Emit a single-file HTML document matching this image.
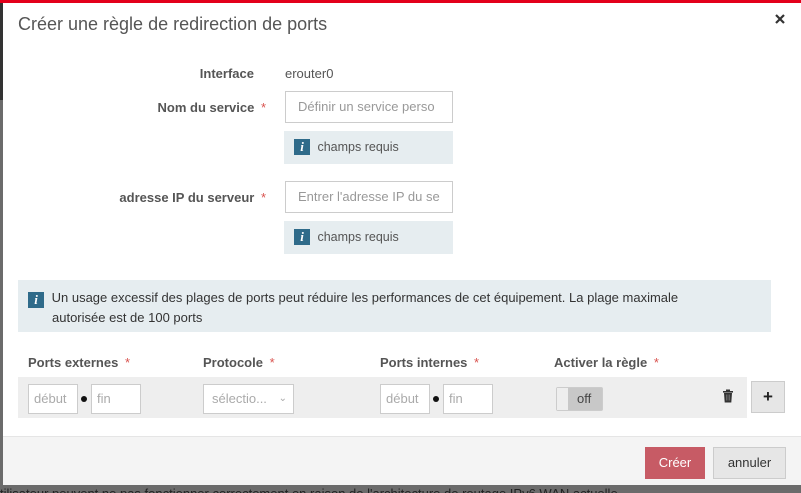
<!DOCTYPE html>
<html><head><meta charset="utf-8"><style>
*{box-sizing:border-box;margin:0;padding:0}
body{width:801px;height:493px;overflow:hidden;background:#6b6b6b;font-family:"Liberation Sans",sans-serif;position:relative;font-size:13px;color:#333}
.a{position:absolute}
.modal{left:3px;top:3px;width:798px;height:482px;background:#fff}
.red{left:0;top:0;width:801px;height:3px;background:#e3001b}
.lbl{font-weight:bold;color:#555;text-align:right;width:240px;left:14px;font-size:13px}
.st{color:#d9534f;font-weight:normal;margin-left:3px}
.inp{border:1px solid #ccc;background:#fff;color:#999;font-size:13px;padding-left:12px;line-height:30px;white-space:nowrap;overflow:hidden}
.info{background:#e6edf0;color:#555;font-size:12.5px}
.ic{display:inline-block;width:16px;height:16px;background:#2f6b8a;color:#fff;font-family:"Liberation Serif",serif;font-style:italic;font-weight:bold;font-size:13px;text-align:center;line-height:16px;margin-right:4px}
.hd{font-weight:bold;color:#555;font-size:13px}
.sm{border:1px solid #ccc;background:#fff;color:#aaa;font-size:13px;padding-left:5px;line-height:28px}
.dot{width:6px;height:6px;border-radius:50%;background:#111}
</style></head><body>
<div class="a" style="left:0;top:0;width:3px;height:100px;background:#333"></div>
<div class="a" style="left:0;top:487px;width:801px;font-size:13px;color:#222;line-height:14px;height:6px;overflow:hidden;white-space:nowrap">tilisateur peuvent ne pas fonctionner correctement en raison de l'architecture de routage IPv6 WAN actuelle.</div>
<div class="a modal"></div>
<div class="a red"></div>
<div class="a" style="left:18px;top:14px;font-size:18px;color:#555">Créer une règle de redirection de ports</div>
<svg class="a" style="left:775px;top:14px" width="10" height="10" viewBox="0 0 10 10"><path d="M1 1L9 9M9 1L1 9" stroke="#333" stroke-width="2.2"/></svg>

<div class="a lbl" style="top:66px">Interface</div>
<div class="a" style="left:285px;top:66px;color:#555">erouter0</div>
<div class="a lbl" style="top:100px;width:252px">Nom du service <span class="st">*</span></div>
<div class="a inp" style="left:285px;top:91px;width:168px;height:32px">Définir un service perso</div>
<div class="a info" style="left:284px;top:131px;width:169px;height:33px;padding:8px 0 0 10px"><span class="ic">i</span> champs requis</div>
<div class="a lbl" style="top:190px;width:252px">adresse IP du serveur <span class="st">*</span></div>
<div class="a inp" style="left:285px;top:181px;width:168px;height:32px">Entrer l'adresse IP du se</div>
<div class="a info" style="left:284px;top:221px;width:169px;height:33px;padding:8px 0 0 10px"><span class="ic">i</span> champs requis</div>

<div class="a info" style="left:18px;top:280px;width:753px;height:52px;padding:8px 0 0 10px;line-height:20px;color:#333;font-size:13px">
<span class="ic" style="vertical-align:-2px">i</span> Un usage excessif des plages de ports peut réduire les performances de cet équipement. La plage maximale<br><span style="padding-left:24px">autorisée est de 100 ports</span></div>

<div class="a hd" style="left:28px;top:355px">Ports externes <span class="st">*</span></div>
<div class="a hd" style="left:203px;top:355px">Protocole <span class="st">*</span></div>
<div class="a hd" style="left:380px;top:355px">Ports internes <span class="st">*</span></div>
<div class="a hd" style="left:554px;top:355px">Activer la règle <span class="st">*</span></div>
<div class="a" style="left:18px;top:377px;width:729px;height:41px;background:#eee"></div>
<div class="a sm" style="left:28px;top:384px;width:50px;height:30px">début</div>
<div class="a dot" style="left:81px;top:396px"></div>
<div class="a sm" style="left:91px;top:384px;width:50px;height:30px">fin</div>
<div class="a sm" style="left:203px;top:384px;width:91px;height:30px;padding-left:8px">sélectio... <span style="position:absolute;right:6px;font-size:10px">&#8964;</span></div>
<div class="a sm" style="left:380px;top:384px;width:50px;height:30px">début</div>
<div class="a dot" style="left:433px;top:396px"></div>
<div class="a sm" style="left:443px;top:384px;width:50px;height:30px">fin</div>
<div class="a" style="left:556px;top:387px;width:47px;height:24px;border:1px solid #ccc;background:#c8c8c8;border-radius:2px"><div class="a" style="left:0;top:0;width:11px;height:22px;background:#eee"></div><div class="a" style="left:20px;top:3px;color:#444;font-size:13px">off</div></div>
<svg class="a" style="left:722px;top:389px" width="12" height="14" viewBox="0 0 12 14"><rect x="1" y="2" width="10" height="1.6" fill="#333"/><rect x="4" y="0.5" width="4" height="2" fill="#333"/><path d="M2 4h8l-.7 9.5H2.7z" fill="#333"/><path d="M4.5 5.5v6M6 5.5v6M7.5 5.5v6" stroke="#888" stroke-width=".6"/></svg>
<div class="a" style="left:751px;top:381px;width:34px;height:32px;background:#e6e6e6;border:1px solid #ccc;text-align:center;line-height:29px;font-weight:bold;font-size:17px;color:#222">+</div>

<div class="a" style="left:3px;top:436px;width:798px;height:49px;background:#f4f4f4;border-top:1px solid #e5e5e5"></div>
<div class="a" style="left:645px;top:447px;width:60px;height:32px;background:#c75b65;color:#fff;text-align:center;line-height:32px;font-size:13px">Créer</div>
<div class="a" style="left:713px;top:447px;width:73px;height:32px;background:#e6e6e6;border:1px solid #ccc;color:#333;text-align:center;line-height:30px;font-size:13px">annuler</div>
</body></html>
